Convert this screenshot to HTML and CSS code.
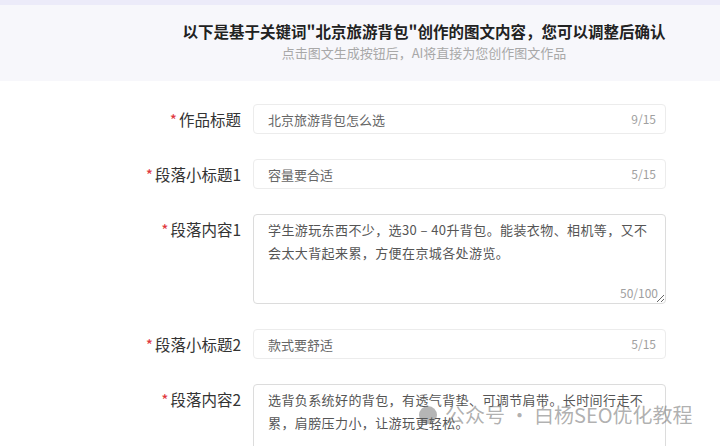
FILE: index.html
```html
<!DOCTYPE html>
<html lang="zh-CN">
<head>
  <meta charset="UTF-8" />
  <meta name="viewport" content="width=device-width, initial-scale=1.0" />
  <title>图文内容确认</title>
  <link rel="stylesheet" href="styles.css">
</head>
<body>
  <header class="intro">
    <h1 class="intro-title">以下是基于关键词"北京旅游背包"创作的图文内容，您可以调整后确认</h1>
    <p class="intro-sub">点击图文生成按钮后，AI将直接为您创作图文作品</p>
  </header>

  <form class="form">
    <div class="row">
      <label class="label"><span class="req">*</span>作品标题</label>
      <div class="field">
        <input class="input" type="text" value="北京旅游背包怎么选" />
        <span class="count">9/15</span>
      </div>
    </div>

    <div class="row">
      <label class="label"><span class="req">*</span>段落小标题1</label>
      <div class="field">
        <input class="input" type="text" value="容量要合适" />
        <span class="count">5/15</span>
      </div>
    </div>

    <div class="row">
      <label class="label"><span class="req">*</span>段落内容1</label>
      <div class="field">
        <textarea class="textarea">学生游玩东西不少，选30 – 40升背包。能装衣物、相机等，又不会太大背起来累，方便在京城各处游览。</textarea>
        <span class="count count-area">50/100</span>
      </div>
    </div>

    <div class="row">
      <label class="label"><span class="req">*</span>段落小标题2</label>
      <div class="field">
        <input class="input" type="text" value="款式要舒适" />
        <span class="count">5/15</span>
      </div>
    </div>

    <div class="row">
      <label class="label"><span class="req">*</span>段落内容2</label>
      <div class="field">
        <textarea class="textarea">选背负系统好的背包，有透气背垫、可调节肩带。长时间行走不累，肩膀压力小，让游玩更轻松。</textarea>
      </div>
    </div>
  </form>

  <!-- watermark -->
  <div class="watermark">
    <span class="wm-icon"></span>
    <span>公众号 · 白杨SEO优化教程</span>
  </div>
</body>
</html>
```

FILE: styles.css
```css
body {
  margin: 0;
  font-family: "Noto Sans CJK SC", "Noto Sans", sans-serif;
  background-color: #ffffff;
  color: #333;
  overflow: hidden;
  height: 446px;
}

.intro {
  background-color: #f7f7fb;
  border-top: 5px solid #ecebf9;
  padding-left: 128px;
  text-align: center;
  box-sizing: border-box;
  height: 81px;
}

.intro-title {
  margin: 0;
  padding-top: 15px;
  font-size: 15.5px;
  font-weight: bold;
  color: #222;
  line-height: 22px;
}

.intro-sub {
  margin: 0;
  padding-top: 1px;
  font-size: 13px;
  color: #a8a8a8;
  line-height: 20px;
}

.form {
  padding-top: 23px;
  display: flex;
  flex-direction: column;
  gap: 25px;
}

.row {
  display: grid;
  grid-template-columns: 241px 413px;
  column-gap: 12px;
  align-items: start;
}

.label {
  text-align: right;
  font-size: 15.5px;
  color: #333;
  line-height: 30px;
}

.req {
  color: #e0363b;
  margin-right: 2px;
}

.field {
  position: relative;
}

.input {
  display: block;
  width: 100%;
  height: 30px;
  box-sizing: border-box;
  border: 1px solid #ececec;
  border-radius: 4px;
  padding: 0 50px 0 14px;
  font-family: inherit;
  font-size: 13px;
  color: #666;
  background: #fff;
  outline: none;
}

.textarea {
  display: block;
  width: 100%;
  height: 90px;
  box-sizing: border-box;
  border: 1px solid #dcdcdc;
  border-radius: 4px;
  padding: 3px 14px;
  font-family: inherit;
  font-size: 13px;
  line-height: 23px;
  letter-spacing: 0.4px;
  color: #555;
  background: #fff;
  outline: none;
  resize: vertical;
}

.count {
  position: absolute;
  right: 10px;
  top: 0;
  line-height: 30px;
  font-size: 12px;
  color: #a0a0a0;
}

.count-area {
  top: auto;
  bottom: 2px;
  right: 8px;
  line-height: 18px;
}

.watermark {
  position: absolute;
  left: 419px;
  top: 400px;
  display: flex;
  align-items: center;
  gap: 8px;
  font-size: 20px;
  color: rgba(110, 110, 110, 0.55);
}

.wm-icon {
  width: 18px;
  height: 18px;
  border-radius: 50%;
  background: rgba(90, 90, 90, 0.45);
}
```
